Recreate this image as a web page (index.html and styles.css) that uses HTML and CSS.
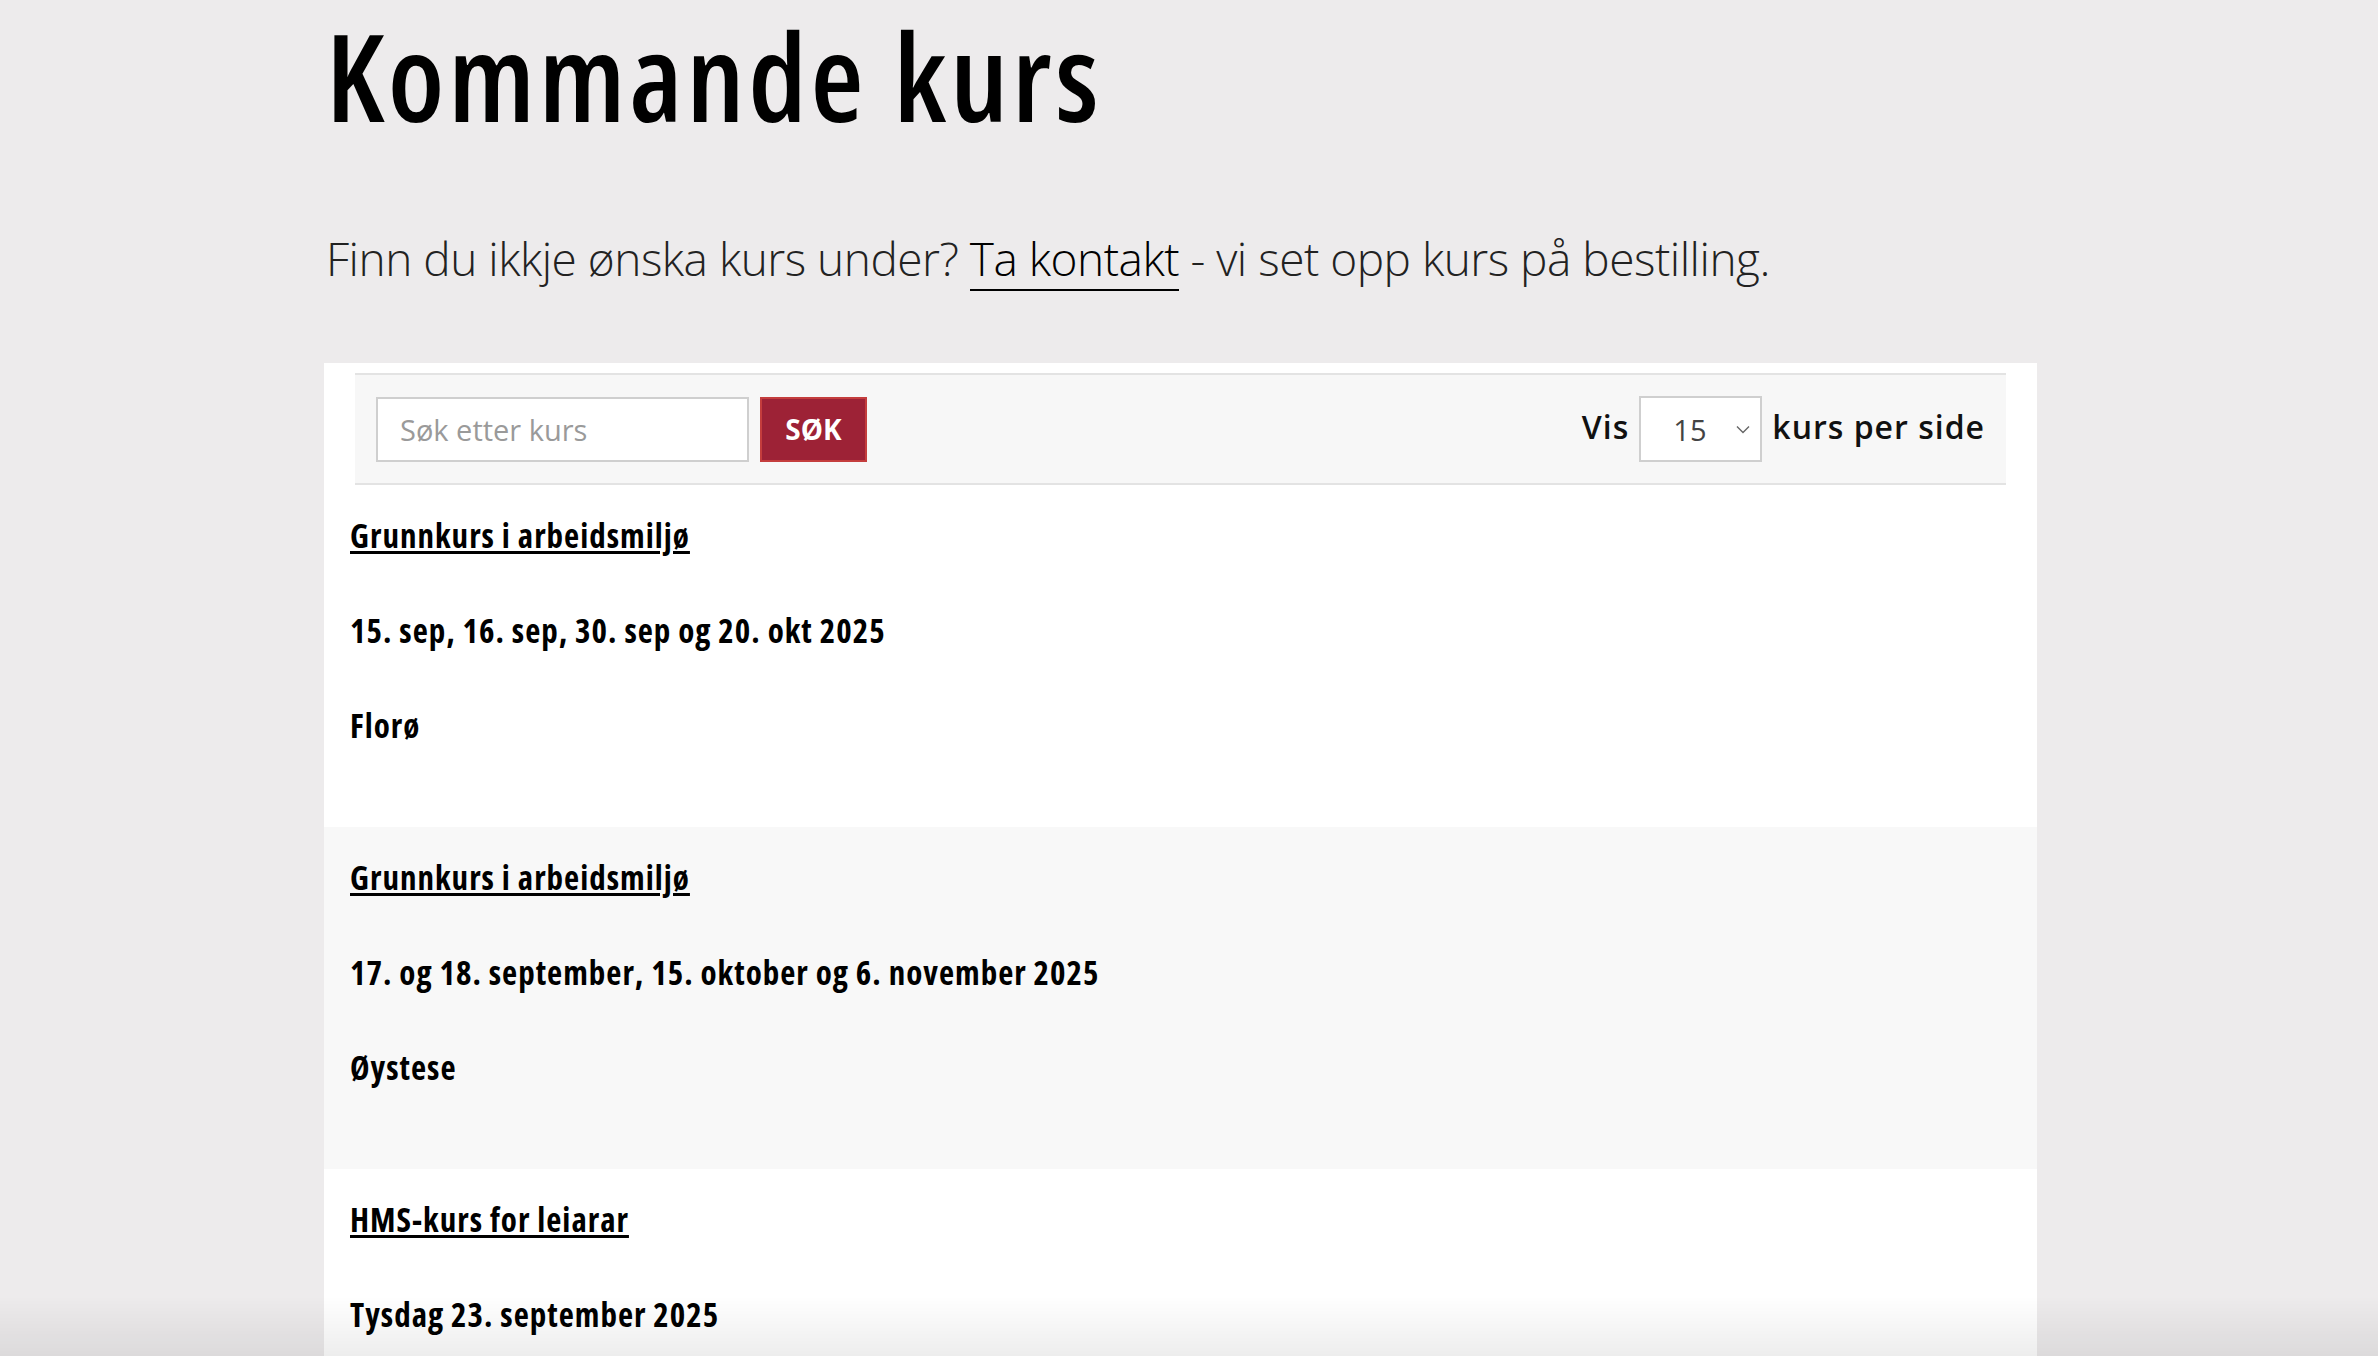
FILE: index.html
```html
<!DOCTYPE html>
<html lang="nn">
<head>
<meta charset="utf-8">
<title>Kommande kurs</title>
<link rel="stylesheet" href="styles.css">
</head>
<body>
<main class="page">
  <h1 class="title">Kommande kurs</h1>
  <p class="lead">Finn du ikkje ønska kurs under? <a class="lead-link" href="#">Ta kontakt</a> - vi set opp kurs på bestilling.</p>

  <section class="panel">
    <div class="toolbar">
      <form class="search">
        <input class="search-input" type="text" placeholder="Søk etter kurs">
        <button class="search-btn" type="button">SØK</button>
      </form>
      <div class="perpage">
        <span class="perpage-label">Vis</span>
        <div class="select">
          <span class="select-value">15</span>
          <svg class="select-chevron" width="14" height="9" viewBox="0 0 14 9"><path d="M1 1.5 L7 7.5 L13 1.5" fill="none" stroke="#666" stroke-width="1.4"/></svg>
        </div>
        <span class="perpage-label">kurs per side</span>
      </div>
    </div>

    <article class="course">
      <p class="course-line"><a class="course-link" href="#">Grunnkurs i arbeidsmiljø</a></p>
      <p class="course-line">15. sep, 16. sep, 30. sep og 20. okt 2025</p>
      <p class="course-line">Florø</p>
    </article>
    <article class="course alt">
      <p class="course-line"><a class="course-link" href="#">Grunnkurs i arbeidsmiljø</a></p>
      <p class="course-line">17. og 18. september, 15. oktober og 6. november 2025</p>
      <p class="course-line">Øystese</p>
    </article>
    <article class="course">
      <p class="course-line"><a class="course-link" href="#">HMS-kurs for leiarar</a></p>
      <p class="course-line">Tysdag 23. september 2025</p>
    </article>
  </section>
</main>
<div class="bottom-shade"></div>
</body>
</html>
```

FILE: styles.css
```css
html, body {
  margin: 0;
  padding: 0;
}

body {
  background: #edebec;
  color: #000;
  font-family: "Open Sans", "Liberation Sans", sans-serif;
}

.page {
  width: 1713px;
  margin-left: 324px;
}

.title {
  margin: 0;
  padding: 14px 0 0 2px;
  font-family: "Open Sans", sans-serif;
  font-stretch: 75%;
  font-weight: 600;
  font-size: 122px;
  line-height: 122px;
  letter-spacing: 3.8px;
  color: #000;
}

.lead {
  margin: 93px 0 0 2px;
  font-family: "Open Sans", sans-serif;
  font-weight: 300;
  font-size: 46px;
  line-height: 58px;
  letter-spacing: -0.5px;
  color: #222;
}

.lead-link {
  color: #000;
  text-decoration: none;
  border-bottom: 2px solid #000;
}

.panel {
  margin-top: 76px;
  background: #fff;
  padding-top: 10px;
}

.toolbar {
  margin: 0 31px;
  background: #f7f7f7;
  border-top: 2px solid #e3e3e3;
  border-bottom: 2px solid #e3e3e3;
  padding: 21px;
  display: flex;
  align-items: center;
  justify-content: space-between;
}

.search {
  display: flex;
  align-items: center;
  gap: 11px;
  margin: 0;
}

.search-input {
  box-sizing: border-box;
  width: 373px;
  height: 65px;
  border: 2px solid #cfcfcf;
  background: #fff;
  padding: 0 22px;
  font-family: "Open Sans", sans-serif;
  font-size: 29px;
  color: #333;
  outline: none;
}

.search-input::placeholder {
  color: #9a9a9a;
}

.search-btn {
  box-sizing: border-box;
  width: 107px;
  height: 65px;
  background: #9d2236;
  border: 2px solid #c43d3d;
  color: #fff;
  font-family: "Open Sans", sans-serif;
  font-weight: 700;
  font-size: 28px;
  padding: 0;
  cursor: pointer;
}

.perpage {
  display: flex;
  align-items: center;
  gap: 10px;
}

.perpage-label {
  font-family: "Open Sans", sans-serif;
  font-weight: 600;
  font-size: 32px;
  letter-spacing: 1px;
  color: #111;
  padding-bottom: 5px;
}

.select {
  box-sizing: border-box;
  width: 123px;
  height: 66px;
  border: 2px solid #cfcfcf;
  background: #fff;
  display: flex;
  align-items: center;
  justify-content: space-between;
  padding: 0 10px 0 32px;
}

.select-value {
  font-family: "Open Sans", sans-serif;
  font-size: 29px;
  color: #444;
  padding-top: 1px;
}

.select-chevron {
  display: block;
}

.course {
  padding: 27px 26px 78px;
  background: #fff;
}

.course.alt {
  background: #f8f8f8;
}

.course-line {
  margin: 0 0 48px;
  font-family: "Open Sans", sans-serif;
  font-stretch: 75%;
  font-weight: 700;
  font-size: 33px;
  line-height: 47px;
  letter-spacing: 1px;
  color: #000;
}

.course-line:last-child {
  margin-bottom: 0;
}

.course-link {
  color: #000;
  text-decoration: underline;
  text-decoration-thickness: 3px;
  text-underline-offset: 3px;
}

.bottom-shade {
  position: fixed;
  left: 0;
  right: 0;
  bottom: 0;
  height: 60px;
  pointer-events: none;
  background: linear-gradient(to bottom, rgba(0, 0, 0, 0), rgba(0, 0, 0, 0.07));
}
```
